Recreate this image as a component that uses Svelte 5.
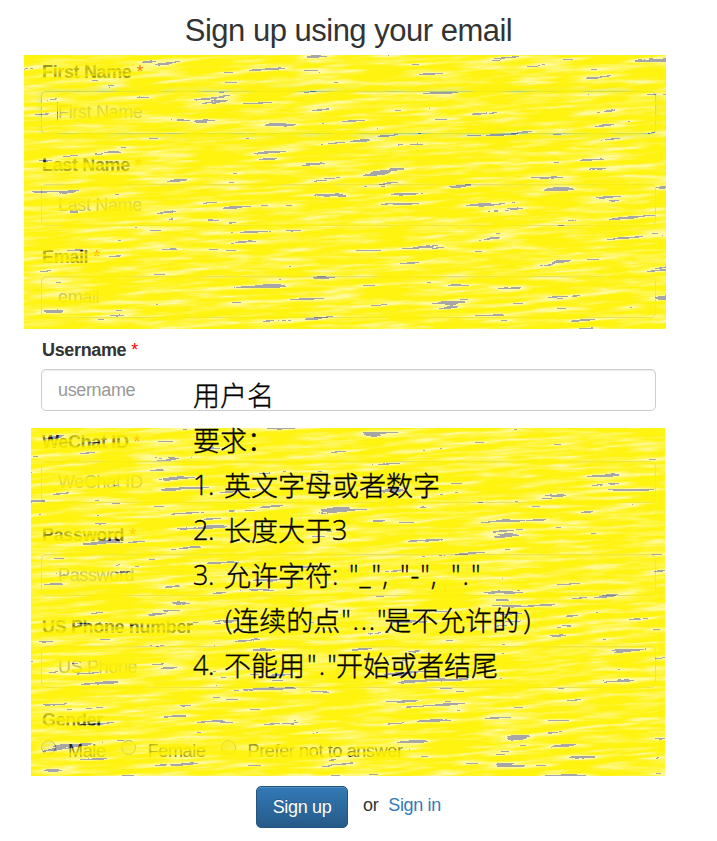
<script>
  const fields = [
    { label: 'First Name', hint: 'First Name', required: true, focused: true },
    { label: 'Last Name', hint: 'Last Name', required: true },
    { label: 'Email', hint: 'email', required: true },
    { label: 'Username', hint: 'username', required: true },
    { label: 'WeChat ID', hint: 'WeChat ID', required: true },
    { label: 'Password', hint: 'Password', required: true },
    { label: 'US Phone number', hint: 'US Phone', required: false }
  ];
  const genders = ['Male', 'Female', 'Prefer not to answer'];
  const marks = [
    { name: 'top', w: 642, h: 274, seed: 4 },
    { name: 'bottom', w: 634, h: 348, seed: 11 }
  ];
</script>

<main>
  <h1><span>Sign up using your email</span></h1>
  <form>
    {#each fields as f}
      <div class="group">
        <div class="label"><span class="name">{f.label}</span>{#if f.required}<span class="star">*</span>{/if}</div>
        <div class="input" class:focused={f.focused}><span>{f.hint}</span></div>
      </div>
    {/each}
    <div class="group last">
      <div class="label"><span class="name">Gender</span></div>
      <div class="radios">
        {#each genders as g}
          <span class="option"><i></i><span>{g}</span></span>
        {/each}
      </div>
    </div>
  </form>
  <footer>
    <button type="button">Sign up</button>
    <span class="or">or</span>
    <a href="#signin">Sign in</a>
  </footer>

  {#each marks as m}
    <svg class="mark {m.name}" width={m.w} height={m.h} viewBox="0 0 {m.w} {m.h}" aria-hidden="true">
      <defs>
        <filter id="ink-{m.name}" x="0" y="0" width="100%" height="100%" color-interpolation-filters="sRGB">
          <feTurbulence type="fractalNoise" baseFrequency="0.018 0.2" numOctaves="5" seed={m.seed} />
          <feColorMatrix values="0 0 0 0 1  0 0 0 0 0.949  0 0 0 0 0  1.9 1.1 0 0 -1" />
          <feComponentTransfer><feFuncA type="table" tableValues="0.35 0.42 0.55 0.66 0.73 0.8 0.87 0.93 0.94 0.94 0.94" /></feComponentTransfer>
        </filter>
      </defs>
      <rect x="-40" y="-50" width={m.w + 80} height={m.h + 100} filter="url(#ink-{m.name})" transform="rotate(-3 {m.w / 2} {m.h / 2})" />
    </svg>
  {/each}

  <div class="notes">
    <p>用户名</p>
    <p>要求：</p>
    <p><b>1.</b>英文字母或者数字</p>
    <p><b>2.</b>长度大于<span class="lat">3</span></p>
    <p><b>3.</b>允许字符<span class="lat rules"><span>:</span><span>"_",</span><span>"-",</span><span>"."</span></span></p>
    <p class="indent"><span class="lat">(</span>连续的点<span class="lat dots">"..."</span>是不允许的<span class="lat end">)</span></p>
    <p><b>4.</b>不能用<span class="lat dot">"."</span>开始或者结尾</p>
  </div>
</main>

<style>
  :global(body) { margin: 0; background: #fff; }
  main {
    position: relative;
    width: 717px;
    height: 841px;
    overflow: hidden;
    box-sizing: border-box;
    padding: 0 61px 0 41px;
    font: 18px/24px "Liberation Sans", Arial, sans-serif;
    letter-spacing: -0.35px;
    color: #333;
    display: flex;
    flex-direction: column;
  }
  h1 {
    margin: 0;
    height: 60px;
    padding-top: 14px;
    box-sizing: border-box;
    font-size: 31px;
    letter-spacing: -0.5px;
    line-height: 34px;
    font-weight: 400;
    text-align: center;
    white-space: nowrap;
  }
  .group { height: 92.5px; }
  .last { height: 78px; }
  .label { height: 24px; margin: 0 0 7px 1px; font-weight: 700; display: flex; gap: 5px; }
  .star { color: #f00; font-weight: 400; }
  .input {
    height: 42px;
    box-sizing: border-box;
    border: 1px solid #ccc;
    border-radius: 5px;
    padding: 0 16px;
    line-height: 40px;
    color: #999;
    box-shadow: inset 0 1px 1px rgba(0, 0, 0, .075);
  }
  .focused { border-color: #66afe9; box-shadow: inset 0 1px 1px rgba(0,0,0,.075), 0 0 9px rgba(102,175,233,.6); height: 43px; }
  .focused span { border-left: 1px solid #333; margin-left: -1px; }
  .radios { display: flex; gap: 15px; height: 24px; margin-top: 5px; }
  .option { display: flex; gap: 12px; white-space: nowrap; }
  i {
    width: 15px; height: 15px; margin-top: 1px;
    box-sizing: border-box; border: 1px solid #888; border-radius: 50%;
    background: linear-gradient(135deg, #ddd, #fff);
  }
  form { height: 725.5px; }
  footer { display: flex; padding: 0 0 0 215px; margin-top: 0.5px; line-height: 38px; }
  button {
    width: 92px; height: 42px; padding: 0;
    border: 1px solid #245580; border-radius: 5px;
    font: inherit; letter-spacing: inherit; color: #fff;
    background: linear-gradient(#337ab7, #265a88);
    box-shadow: inset 0 1px 0 rgba(255,255,255,.15);
    text-shadow: 0 -1px 0 rgba(0,0,0,.2);
  }
  .or { margin: 0 10px 0 15px; }
  a { color: #337ab7; text-decoration: none; }
  .mark { position: absolute; overflow: hidden; }
  .top { left: 24px; top: 55px; }
  .bottom { left: 31px; top: 428px; }
  .notes {
    position: absolute; left: 193px; top: 372px;
    color: #000;
    font: 300 27px/45px "Noto Sans CJK SC", sans-serif;
    letter-spacing: 0;
    -webkit-text-stroke: 0.35px #000;
    white-space: nowrap;
  }
  p { margin: 0; height: 45px; display: flex; }
  b { width: 31px; font: 300 27px/45px "Open Sans", "Noto Sans", sans-serif; letter-spacing: -0.5px; }
  .lat { font: 300 27px/45px "Open Sans", "Noto Sans", sans-serif; }
  .rules { display: flex; letter-spacing: 1px; }
  .rules span:nth-child(1) { width: 17px; }
  .rules span:nth-child(2) { width: 51px; }
  .rules span:nth-child(3) { width: 51px; }
  .rules span:nth-child(4) { letter-spacing: 2px; }
  .indent { padding-left: 32px; }
  .dots { width: 44px; letter-spacing: 1.7px; text-indent: 1px; }
  .dot { width: 31px; letter-spacing: 2.2px; text-indent: 2px; }
  .end { padding-left: 4px; }
</style>
